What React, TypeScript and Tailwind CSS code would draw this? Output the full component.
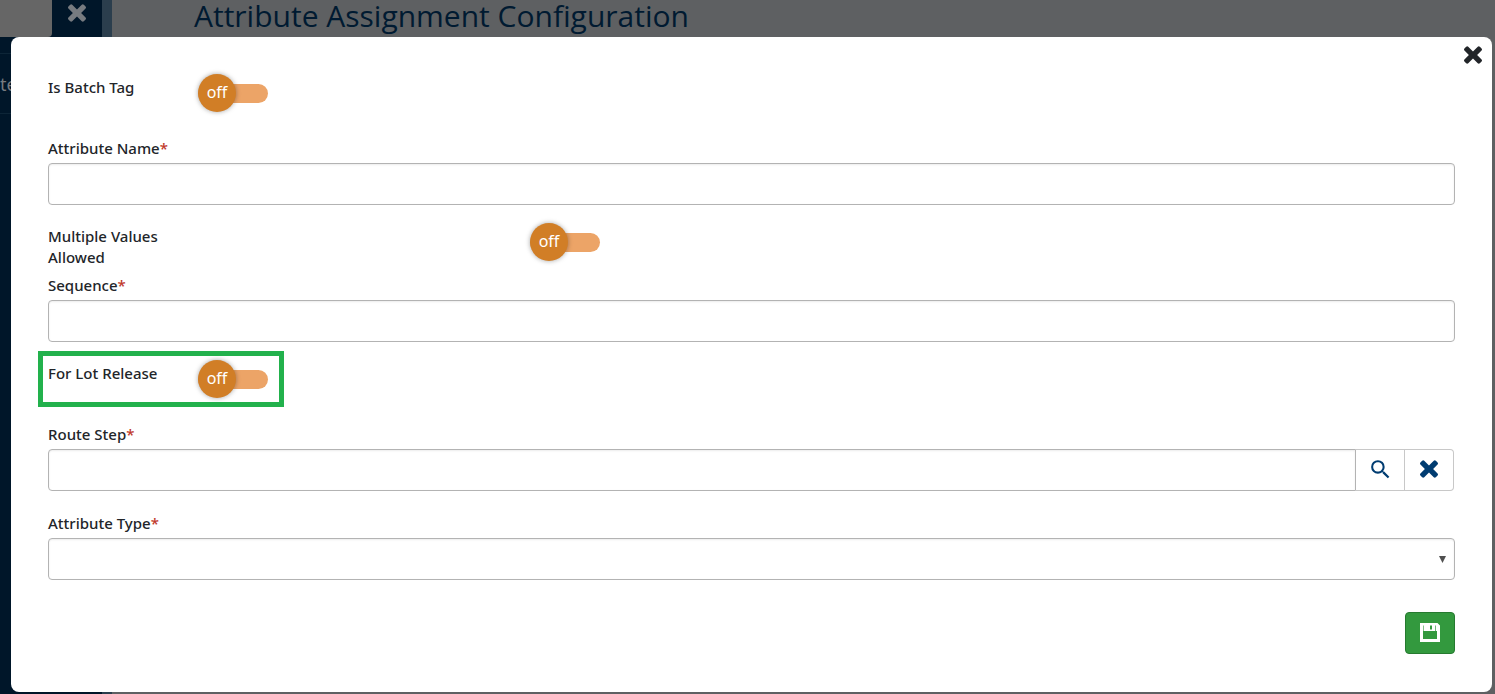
import React from "react";
import { MdSearch } from "react-icons/md";

function Cross({ className }: { className: string }) {
  return (
    <svg viewBox="302 366 1188 1188" className={className} fill="currentColor" aria-hidden="true">
      <path d="M1490 1322q0 40-28 68l-116 116q-28 28-68 28t-68-28l-314-314-314 314q-28 28-68 28t-68-28l-116-116q-28-28-28-68t28-68l294-294-294-294q-28-28-28-68t28-68l116-116q28-28 68-28t68 28l314 314 314-314q28-28 68-28t68 28l116 116q28 28 28 68t-28 68l-294 294 294 294q28 28 28 68z" />
    </svg>
  );
}

function Floppy() {
  return (
    <svg viewBox="0 0 20 19" className="h-[19px] w-5" aria-hidden="true">
      <path
        fill="white"
        fillRule="evenodd"
        d="M0 0H17.5L20 2.5V19H0ZM3 8V16H17V8ZM3 2.5V8H3.6V2.5ZM15 2.5V8H15.7V2.5ZM10 2.5V6.5H12V2.5Z"
      />
    </svg>
  );
}

function Toggle({ id }: { id: string }) {
  const [on, setOn] = React.useState(false);
  return (
    <button
      id={id}
      type="button"
      role="switch"
      aria-checked={on}
      onClick={() => setOn(!on)}
      className="-mt-[3px] flex h-[38px] w-[70px] items-center"
    >
      <span className="flex h-[19px] w-full items-center rounded-full bg-[#eca467]">
        <span
          className={`flex size-[38px] shrink-0 items-center justify-center rounded-full bg-[#d17e26] pb-0.5 font-['Noto_Sans',sans-serif] text-base leading-5 font-normal text-white shadow-[0_0_5px_rgba(0,0,0,0.35)] ${on ? "ml-auto" : ""}`}
        >
          {on ? "on" : "off"}
        </span>
      </span>
    </button>
  );
}

const control =
  "h-[42px] w-full min-w-0 border border-[#b3b3b3] bg-white px-3 shadow-[inset_0_1px_2px_rgba(0,0,0,0.08)] outline-none focus:border-[#003c71]";

function Field({ id, label, children }: { id: string; label: string; children: React.ReactNode }) {
  return (
    <div className="flex flex-col gap-1">
      <label htmlFor={id}>
        {label}
        <span className="text-[#c0392b]">*</span>
      </label>
      {children}
    </div>
  );
}

export default function App() {
  return (
    <div className="relative min-h-screen bg-[#5e6062] font-['Noto_Sans',sans-serif]">
      <div className="absolute inset-0 flex overflow-hidden">
        <aside className="flex w-[102px] shrink-0 flex-col bg-[#001629] text-[#777b80]">
          <div className="flex h-[37px]">
            <div className="w-[52px] rounded-br bg-[#666666]" />
            <button type="button" aria-label="Close menu" className="flex flex-1 justify-center pt-1">
              <Cross className="size-[18px]" />
            </button>
          </div>
          <div className="mt-4 h-[61px] border-y border-[#0d2537] pt-[18px] text-lg leading-6">te</div>
        </aside>
        <div className="w-2.5 shrink-0 bg-[#2b3e4d]" />
        <main className="flex-1 pl-[82px]">
          <h1 className="font-['Open_Sans',sans-serif] text-3xl leading-8 text-[#001a31]">
            Attribute Assignment Configuration
          </h1>
        </main>
      </div>

      <div className="relative pt-[37px] pr-[3px] pb-0.5 pl-[11px]">
        <div
          role="dialog"
          aria-label="Attribute Assignment Configuration"
          className="relative rounded-lg bg-white px-[37px] pt-10 pb-[38px] text-[15px] leading-[21px] font-medium text-[#222529]"
        >
          <button type="button" aria-label="Close" className="absolute top-[9px] right-2.5">
            <Cross className="size-[18px]" />
          </button>
          <form onSubmit={(e) => e.preventDefault()}>
            <div className="grid h-[61px] grid-cols-[150px_1fr]">
              <label htmlFor="batch">Is Batch Tag</label>
              <Toggle id="batch" />
            </div>

            <Field id="name" label="Attribute Name">
              <input id="name" type="text" className={`${control} rounded`} />
            </Field>

            <div className="mt-[21px] mb-[7px] grid h-[42px] grid-cols-[482px_1fr]">
              <label htmlFor="multiple" className="w-[130px]">
                Multiple Values Allowed
              </label>
              <Toggle id="multiple" />
            </div>

            <Field id="sequence" label="Sequence">
              <input id="sequence" type="text" className={`${control} rounded`} />
            </Field>

            <div className="relative mt-[21px] grid h-[61px] grid-cols-[150px_1fr]">
              <label htmlFor="lot">For Lot Release</label>
              <Toggle id="lot" />
              <div className="pointer-events-none absolute -top-3 -left-2.5 h-14 w-[246px] border-[5px] border-[#22b14c]" />
            </div>

            <Field id="route" label="Route Step">
              <div className="flex pr-px">
                <input id="route" type="text" className={`${control} flex-1 rounded-l`} />
                <button
                  type="button"
                  aria-label="Search"
                  className="flex w-[49px] items-center justify-center border-y border-r border-[#c8c8c8] pb-0.5 text-[#003c71]"
                >
                  <MdSearch className="size-[25px]" />
                </button>
                <button
                  type="button"
                  aria-label="Clear"
                  className="flex w-[49px] items-center justify-center rounded-r border-y border-r border-[#c8c8c8] pb-0.5 text-[#003c71]"
                >
                  <Cross className="size-[18px]" />
                </button>
              </div>
            </Field>

            <div className="mt-[22px]">
              <Field id="type" label="Attribute Type">
                <div className="relative">
                  <select id="type" className={`${control} block appearance-none rounded`}>
                    <option value="" />
                  </select>
                  <svg
                    viewBox="0 0 7 7"
                    className="pointer-events-none absolute top-[18px] right-[9px] size-[7px]"
                    aria-hidden="true"
                  >
                    <path fill="#505050" d="M0 0H7L3.5 7Z" />
                  </svg>
                </div>
              </Field>
            </div>

            <div className="mt-8 flex justify-end">
              <button
                type="submit"
                aria-label="Save"
                className="flex h-[42px] w-[50px] items-center justify-center rounded border border-[#267a30] bg-[#33993e] pb-0.5"
              >
                <Floppy />
              </button>
            </div>
          </form>
        </div>
      </div>
    </div>
  );
}
